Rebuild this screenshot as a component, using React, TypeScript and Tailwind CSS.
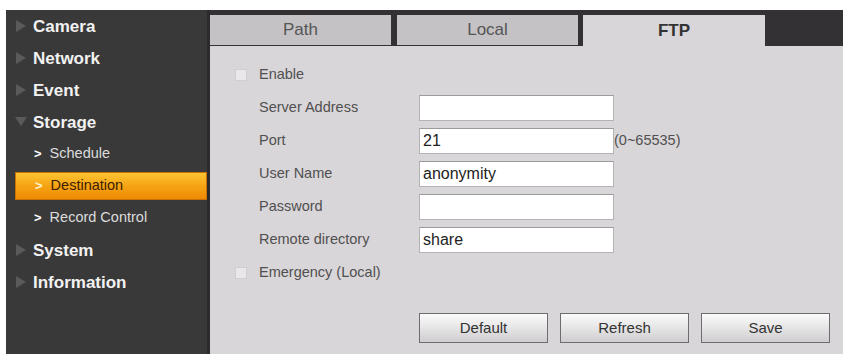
import type { ReactNode } from 'react'

const font = { fontFamily: '"Liberation Sans", Arial, sans-serif' }

function MenuItem({ label, open }: { label: string; open?: boolean }) {
  return (
    <div className="h-[32px] flex items-center pl-[9px]">
      {open ? (
        <svg width="12" height="10" viewBox="0 0 12 10" className="mr-[6px]">
          <polygon points="0,0 12,0 6,9" fill="#5a5a5a" />
        </svg>
      ) : (
        <svg width="12" height="12" viewBox="0 0 12 12" className="mr-[6px]">
          <polygon points="1,0 11,6 1,12" fill="#5a5a5a" />
        </svg>
      )}
      <span className="text-[17px] font-bold text-[#f2f2f2] leading-none">{label}</span>
    </div>
  )
}

function SubItem({ label, active }: { label: string; active?: boolean }) {
  if (active) {
    return (
      <div className="h-[32px] flex items-center">
        <div className="ml-[9px] w-[193px] h-[28px] flex items-center pl-[19px] bg-gradient-to-b from-[#fbc531] via-[#f6a313] to-[#ef8a05] border border-[#c97000]">
          <span className="text-[#fff4d0] font-bold text-[13px] mr-[8px]">&gt;</span>
          <span className="text-[14.5px] text-[#3d2200]">{label}</span>
        </div>
      </div>
    )
  }
  return (
    <div className="h-[32px] flex items-center pl-[28px]">
      <span className="text-white font-bold text-[13px] mr-[8px]">&gt;</span>
      <span className="text-[14.5px] text-[#dcdcdc]">{label}</span>
    </div>
  )
}

function Tab({ label, active }: { label: string; active?: boolean }) {
  return (
    <div
      className={
        active
          ? 'w-[182px] h-[31px] bg-[#d9d6d9] flex items-center justify-center text-[17px] font-bold text-[#333]'
          : 'w-[181px] h-[30px] bg-[#c4c2c4] flex items-center justify-center text-[17px] text-[#555]'
      }
    >
      {label}
    </div>
  )
}

function Checkbox() {
  return <div className="w-[12px] h-[12px] bg-[#e9e7e9] border border-[#d0ced0]" />
}

function Row({ label, children }: { label: string; children?: ReactNode }) {
  return (
    <div className="h-[33px] flex items-center">
      <div className="w-[209px] pl-[49px] text-[14.5px] text-[#505050]">{label}</div>
      {children}
    </div>
  )
}

function Input({ value }: { value?: string }) {
  return (
    <div className="w-[195px] h-[26px] bg-white border border-[#b4b2b4] border-t-[#9c9a9c] flex items-center px-[3px] text-[16px] text-[#222]">
      {value}
    </div>
  )
}

function Button({ label }: { label: string }) {
  return (
    <div className="w-[129px] h-[30px] border border-[#6e6c6e] bg-gradient-to-b from-[#fbfbfb] via-[#e6e5e6] to-[#cfcdcf] flex items-center justify-center text-[15px] text-[#333]">
      {label}
    </div>
  )
}

export default function App() {
  return (
    <div className="w-[843px] h-[354px] bg-white pt-[10px] flex overflow-hidden" style={font}>
      {/* Sidebar */}
      <div className="ml-[6px] w-[204px] bg-[#393939] border-r-[3px] border-[#2c2c2c]">
        <MenuItem label="Camera" />
        <MenuItem label="Network" />
        <MenuItem label="Event" />
        <MenuItem label="Storage" open />
        <SubItem label="Schedule" />
        <SubItem label="Destination" active />
        <SubItem label="Record Control" />
        <MenuItem label="System" />
        <MenuItem label="Information" />
      </div>

      {/* Content */}
      <div className="flex-1 bg-[#d9d6d9] flex flex-col">
        <div className="h-[36px] bg-[#343134] pt-[5px] flex items-start">
          <Tab label="Path" />
          <div className="w-[6px]" />
          <Tab label="Local" />
          <div className="w-[5px]" />
          <Tab label="FTP" active />
        </div>

        <div className="pt-[12px]">
          <div className="h-[33px] flex items-center">
            <div className="w-[49px] pl-[25px]">
              <Checkbox />
            </div>
            <span className="text-[14.5px] text-[#505050]">Enable</span>
          </div>
          <Row label="Server Address">
            <Input />
          </Row>
          <Row label="Port">
            <Input value="21" />
            <span className="text-[14.5px] text-[#505050]">(0~65535)</span>
          </Row>
          <Row label="User Name">
            <Input value="anonymity" />
          </Row>
          <Row label="Password">
            <Input />
          </Row>
          <Row label="Remote directory">
            <Input value="share" />
          </Row>
          <div className="h-[33px] flex items-center">
            <div className="w-[49px] pl-[25px]">
              <Checkbox />
            </div>
            <span className="text-[14.5px] text-[#505050]">Emergency (Local)</span>
          </div>

          <div className="mt-[24px] pl-[209px] flex gap-[12px]">
            <Button label="Default" />
            <Button label="Refresh" />
            <Button label="Save" />
          </div>
        </div>
      </div>
    </div>
  )
}
